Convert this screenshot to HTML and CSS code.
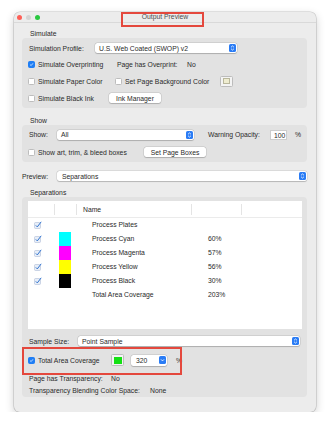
FILE: index.html
```html
<!DOCTYPE html>
<html lang="en">
<head>
  <meta charset="UTF-8" />
  <title>Output Preview</title>
  <link rel="stylesheet" href="styles.css">
</head>
<body>

<div class="window">
  <div class="titlebar">
    <div class="lights">
      <span class="light close"></span>
      <span class="light mini"></span>
      <span class="light zoom"></span>
    </div>
    <div class="title">Output Preview</div>
  </div>

  <div class="content">
    <div class="group-label">Simulate</div>
    <div class="group simulate">
      <div class="row r-profile">
        <span class="lbl profile-lbl">Simulation Profile:</span>
        <div class="select profile-select">
          <span>U.S. Web Coated (SWOP) v2</span>
          <svg class="stepper" width="7" height="8" viewBox="0 0 7 8"><rect width="7" height="8" rx="1.6" fill="#2a7cf5"/><path d="M2 3.3 L3.5 1.9 L5 3.3 M2 4.7 L3.5 6.1 L5 4.7" stroke="#fff" stroke-width="0.8" fill="none"/></svg>
        </div>
      </div>
      <div class="row r-over">
        <label class="check overprint"><span class="cb on"><svg viewBox="0 0 7 7"><path d="M1.6 3.7 L3 5 L5.5 1.9" stroke="#fff" stroke-width="1" fill="none"/></svg></span>Simulate Overprinting</label>
        <span class="kv-lbl">Page has Overprint:</span>
        <span>No</span>
      </div>
      <div class="row r-paper">
        <label class="check paper"><span class="cb"></span>Simulate Paper Color</label>
        <label class="check bg"><span class="cb"></span>Set Page Background Color</label>
        <span class="swatch"><span class="swatch-in paper-in"></span></span>
      </div>
      <div class="row r-black">
        <label class="check black"><span class="cb"></span>Simulate Black Ink</label>
        <button class="btn ink-btn">Ink Manager</button>
      </div>
    </div>

    <div class="group-label show-label">Show</div>
    <div class="group show">
      <div class="row r-show">
        <span class="lbl show-lbl">Show:</span>
        <div class="select show-select">
          <span>All</span>
          <svg class="stepper" width="7" height="8" viewBox="0 0 7 8"><rect width="7" height="8" rx="1.6" fill="#2a7cf5"/><path d="M2 3.3 L3.5 1.9 L5 3.3 M2 4.7 L3.5 6.1 L5 4.7" stroke="#fff" stroke-width="0.8" fill="none"/></svg>
        </div>
        <span class="opacity-lbl">Warning Opacity:</span>
        <span class="num">100</span>
        <span class="pct">%</span>
      </div>
      <div class="row r-boxes">
        <label class="check boxes"><span class="cb"></span>Show art, trim, &amp; bleed boxes</label>
        <button class="btn boxes-btn">Set Page Boxes</button>
      </div>
    </div>

    <div class="row r-preview">
      <span class="preview-lbl">Preview:</span>
      <div class="select preview-select">
        <span>Separations</span>
        <svg class="stepper" width="7" height="8" viewBox="0 0 7 8"><rect width="7" height="8" rx="1.6" fill="#2a7cf5"/><path d="M2 3.3 L3.5 1.9 L5 3.3 M2 4.7 L3.5 6.1 L5 4.7" stroke="#fff" stroke-width="0.8" fill="none"/></svg>
      </div>
    </div>

    <div class="group-label seps-label">Separations</div>
    <div class="group seps">
      <div class="table">
        <div class="thead">
          <span class="th"></span>
          <span class="th"></span>
          <span class="th name-th">Name</span>
          <span class="th"></span>
          <span class="th last"></span>
        </div>
        <div class="tr">
          <span class="td"><svg class="tcb" viewBox="0 0 8 8"><rect x="0.5" y="1.5" width="6" height="6" rx="1" fill="#e8eef7" stroke="#aebdd6" stroke-width="0.6"/><path d="M1.8 4.4 L3.3 5.9 L7.2 0.8" stroke="#2f72cf" stroke-width="1" fill="none"/></svg></span>
          <span class="td"></span>
          <span class="td name">Process Plates</span>
          <span class="td pcv"></span>
          <span class="td"></span>
        </div>
        <div class="tr">
          <span class="td"><svg class="tcb" viewBox="0 0 8 8"><rect x="0.5" y="1.5" width="6" height="6" rx="1" fill="#e8eef7" stroke="#aebdd6" stroke-width="0.6"/><path d="M1.8 4.4 L3.3 5.9 L7.2 0.8" stroke="#2f72cf" stroke-width="1" fill="none"/></svg></span>
          <span class="td"><span class="ink cyan"></span></span>
          <span class="td name">Process Cyan</span>
          <span class="td pcv">60%</span>
          <span class="td"></span>
        </div>
        <div class="tr">
          <span class="td"><svg class="tcb" viewBox="0 0 8 8"><rect x="0.5" y="1.5" width="6" height="6" rx="1" fill="#e8eef7" stroke="#aebdd6" stroke-width="0.6"/><path d="M1.8 4.4 L3.3 5.9 L7.2 0.8" stroke="#2f72cf" stroke-width="1" fill="none"/></svg></span>
          <span class="td"><span class="ink magenta"></span></span>
          <span class="td name">Process Magenta</span>
          <span class="td pcv">57%</span>
          <span class="td"></span>
        </div>
        <div class="tr">
          <span class="td"><svg class="tcb" viewBox="0 0 8 8"><rect x="0.5" y="1.5" width="6" height="6" rx="1" fill="#e8eef7" stroke="#aebdd6" stroke-width="0.6"/><path d="M1.8 4.4 L3.3 5.9 L7.2 0.8" stroke="#2f72cf" stroke-width="1" fill="none"/></svg></span>
          <span class="td"><span class="ink yellow"></span></span>
          <span class="td name">Process Yellow</span>
          <span class="td pcv">56%</span>
          <span class="td"></span>
        </div>
        <div class="tr">
          <span class="td"><svg class="tcb" viewBox="0 0 8 8"><rect x="0.5" y="1.5" width="6" height="6" rx="1" fill="#e8eef7" stroke="#aebdd6" stroke-width="0.6"/><path d="M1.8 4.4 L3.3 5.9 L7.2 0.8" stroke="#2f72cf" stroke-width="1" fill="none"/></svg></span>
          <span class="td"><span class="ink black-ink"></span></span>
          <span class="td name">Process Black</span>
          <span class="td pcv">30%</span>
          <span class="td"></span>
        </div>
        <div class="tr">
          <span class="td"></span>
          <span class="td"></span>
          <span class="td name">Total Area Coverage</span>
          <span class="td pcv">203%</span>
          <span class="td"></span>
        </div>
      </div>

      <div class="row r-sample">
        <span class="lbl sample-lbl">Sample Size:</span>
        <div class="select sample-select">
          <span>Point Sample</span>
          <svg class="stepper" width="7" height="8" viewBox="0 0 7 8"><rect width="7" height="8" rx="1.6" fill="#2a7cf5"/><path d="M2 3.3 L3.5 1.9 L5 3.3 M2 4.7 L3.5 6.1 L5 4.7" stroke="#fff" stroke-width="0.8" fill="none"/></svg>
        </div>
      </div>
      <div class="row r-tac">
        <label class="check tac"><span class="cb on"><svg viewBox="0 0 7 7"><path d="M1.6 3.7 L3 5 L5.5 1.9" stroke="#fff" stroke-width="1" fill="none"/></svg></span>Total Area Coverage</label>
        <span class="swatch tac-swatch"><span class="swatch-in green-in"></span></span>
        <div class="select tac-select">
          <span>320</span>
          <svg class="stepper" width="7" height="8" viewBox="0 0 7 8"><rect width="7" height="8" rx="1.6" fill="#2a7cf5"/><path d="M2 3.4 L3.5 4.9 L5 3.4" stroke="#fff" stroke-width="0.9" fill="none"/></svg>
        </div>
        <span class="tac-pct">%</span>
      </div>
      <div class="row r-trans">
        <span class="lbl trans-lbl">Page has Transparency:</span>
        <span>No</span>
      </div>
      <div class="row r-blend">
        <span class="lbl blend-lbl">Transparency Blending Color Space:</span>
        <span>None</span>
      </div>
    </div>
  </div>

  <div class="mark mark-title"></div>
  <div class="mark mark-tac"></div>
</div>

</body>
</html>
```

FILE: styles.css
```css
* {
  box-sizing: border-box;
}
body {
  margin: 0;
  background: #ffffff;
  font-family: 'Liberation Sans', Arial, sans-serif;
  font-size: 6.8px;
  color: #2a2a2a;
}
.window {
  position: relative;
  margin: 12px 0 0 14px;
  width: 302px;
  height: 400px;
  background: #ececec;
  border-radius: 6px;
  box-shadow: 0 0 0 0.6px rgba(0, 0, 0, 0.18), 0 3px 10px rgba(0, 0, 0, 0.2);
}
.titlebar {
  position: relative;
  height: 11px;
  border-bottom: 1px solid #d9d9d9;
  display: flex;
  align-items: center;
  justify-content: center;
}
.lights {
  position: absolute;
  left: 3px;
  top: 2.5px;
  display: flex;
  gap: 4px;
}
.light {
  width: 5px;
  height: 5px;
  border-radius: 50%;
}
.close { background: #fe5f57; }
.mini { background: #d4d4d4; }
.zoom { background: #2ac840; }
.title {
  color: #4d4d4d;
  line-height: 10px;
}
.content {
  padding: 0 9px 0 8px;
}
.group-label {
  padding: 7px 0 0 8px;
  line-height: 8px;
  height: 15px;
}
.show-label {
  padding-top: 9px;
  height: 17px;
}
.seps-label {
  padding-top: 5px;
  height: 13px;
}
.group {
  background: #e2e2e2;
  border-radius: 4px;
  padding-left: 6px;
}
.row {
  display: flex;
  align-items: center;
}
.lbl {
  padding-left: 1px;
}
label {
  cursor: default;
}

/* simulate */
.simulate {
  height: 70px;
  padding-top: 2px;
}
.r-profile { height: 16px; }
.r-over { height: 17px; }
.r-paper { height: 16px; }
.r-black { height: 18px; }
.profile-lbl { width: 67px; }
.profile-select { width: 142px; }
.overprint { width: 89px; }
.kv-lbl { width: 70px; }
.paper { width: 87px; }
.bg { width: 105px; }
.black { width: 81px; }
.ink-btn { width: 52px; }

.check {
  display: flex;
  align-items: center;
}
.cb {
  width: 7px;
  height: 7px;
  margin-right: 3px;
  border-radius: 1.5px;
  background: #ffffff;
  border: 0.6px solid #bdbdbd;
  flex-shrink: 0;
  display: flex;
}
.cb.on {
  background: #1f7ef5;
  border-color: #1f7ef5;
}
.cb svg {
  width: 100%;
  height: 100%;
}

.select {
  display: flex;
  align-items: center;
  justify-content: space-between;
  height: 10px;
  padding: 0 1px 0 4px;
  background: #ffffff;
  border-radius: 2.5px;
  box-shadow: 0 0 0 0.5px rgba(0, 0, 0, 0.12), 0 0.5px 1px rgba(0, 0, 0, 0.18);
}
.stepper {
  display: block;
}
.btn {
  height: 10px;
  padding: 0;
  border: none;
  font: inherit;
  color: inherit;
  background: #ffffff;
  border-radius: 2.5px;
  box-shadow: 0 0 0 0.5px rgba(0, 0, 0, 0.12), 0 0.5px 1px rgba(0, 0, 0, 0.18);
}
.swatch {
  width: 13px;
  height: 11px;
  display: flex;
  align-items: center;
  justify-content: center;
  background: #f4f4f4;
  border: 0.6px solid #bcbcbc;
  border-radius: 1.5px;
}
.swatch-in {
  width: 7px;
  height: 6px;
}
.paper-in {
  background: #efedd0;
  border: 0.6px solid #b9b79c;
}
.green-in {
  width: 8px;
  height: 7px;
  background: #14e014;
}

/* show */
.show {
  height: 37px;
  padding-top: 1px;
}
.r-show { height: 17px; }
.r-boxes { height: 18px; }
.show-lbl { width: 29px; }
.show-select { width: 137px; }
.opacity-lbl {
  margin-left: 14px;
  width: 62px;
}
.num {
  width: 17px;
  height: 10px;
  line-height: 9px;
  padding-left: 3px;
  background: #ffffff;
  border: 0.6px solid #cdcdcd;
}
.pct {
  margin-left: 8px;
}
.boxes { width: 116px; }
.boxes-btn { width: 62px; }

/* preview */
.r-preview {
  margin-top: 6px;
  height: 16px;
}
.preview-lbl { width: 35px; }
.preview-select {
  width: 250px;
  padding-left: 5px;
}

/* separations */
.seps {
  height: 200px;
  padding: 4px 5px 0 6px;
}
.table {
  height: 128px;
  background: #ffffff;
}
.thead,
.tr {
  display: grid;
  grid-template-columns: 27px 22px 115px 50px 1fr;
}
.thead {
  height: 17px;
  align-items: center;
  border-bottom: 1px solid #ebebeb;
}
.th {
  height: 11px;
  line-height: 11px;
  border-right: 1px solid #e4e4e4;
}
.th.last {
  border-right: none;
}
.name-th {
  padding-left: 6px;
}
.tr {
  height: 14px;
  align-items: center;
}
.td {
  height: 14px;
  line-height: 14px;
}
.tcb {
  display: block;
  width: 8px;
  height: 8px;
  margin: 3px 0 0 6px;
}
.ink {
  display: block;
  width: 12px;
  height: 14px;
  margin-left: 4px;
}
.cyan { background: #00ffff; }
.magenta { background: #ff00ff; }
.yellow { background: #ffff00; }
.black-ink { background: #000000; }
.name {
  padding-left: 15px;
}
.pcv {
  padding-left: 16px;
}

.r-sample {
  margin-top: 4px;
  height: 16px;
}
.sample-lbl { width: 50px; }
.sample-select { width: 222px; }
.r-tac {
  margin-top: 3px;
  height: 16px;
}
.tac { width: 83px; }
.tac-swatch {
  height: 12px;
  margin-right: 7px;
}
.tac-select {
  width: 36px;
  height: 11px;
  padding-left: 5px;
}
.tac-pct {
  margin-left: 9px;
}
.r-trans {
  margin-top: 4px;
  height: 12px;
}
.trans-lbl { width: 83px; }
.r-blend { height: 13px; }
.blend-lbl { width: 122px; }

/* red annotation boxes */
.mark {
  position: absolute;
  border: 2px solid #e4483d;
}
.mark-title {
  left: 107px;
  top: 0;
  width: 83px;
  height: 15px;
}
.mark-tac {
  left: 8px;
  top: 335px;
  width: 160px;
  height: 28px;
}
```
